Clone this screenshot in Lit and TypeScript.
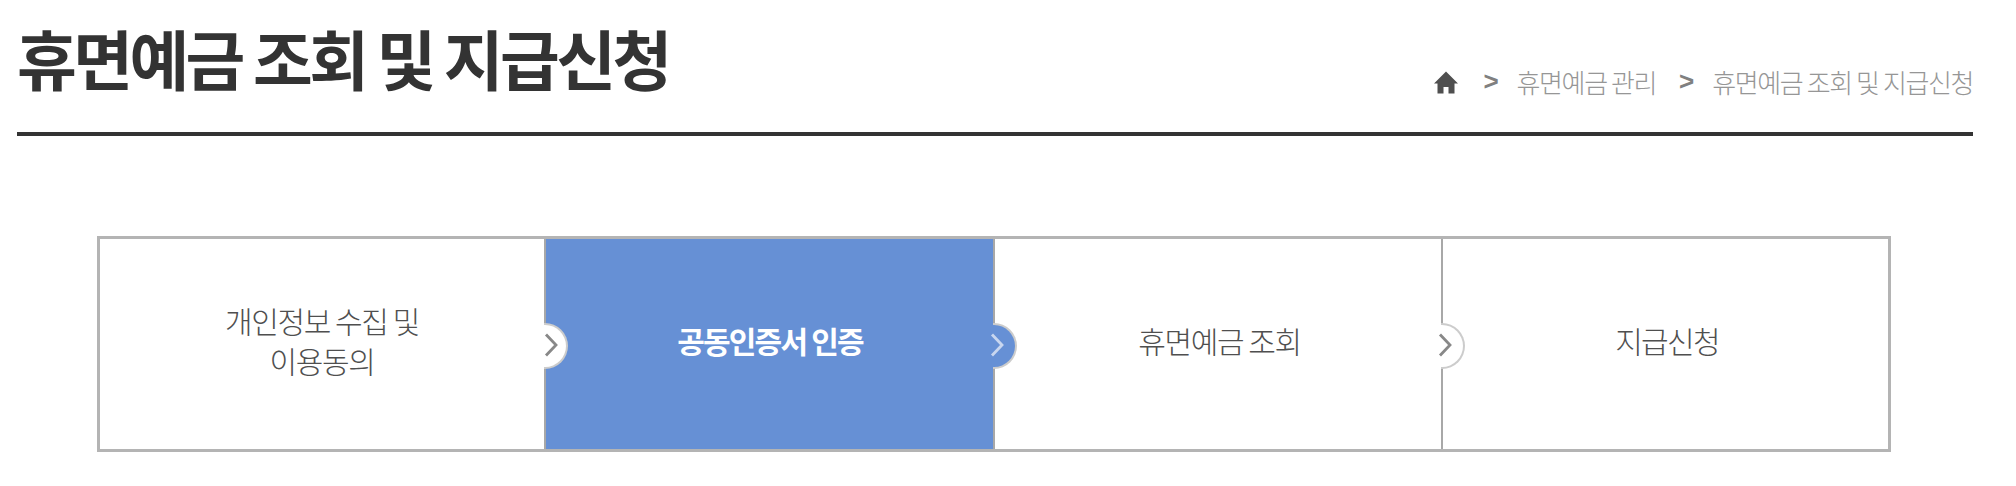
import { LitElement, html, css, svg } from "lit";
import { customElement } from "lit/decorators.js";

@customElement("app-root")
export class AppRoot extends LitElement {
  static styles = css`
    :host { display: block; width: 2016px; height: 486px; background: #fff; font-family: "Noto Sans CJK KR", "Noto Sans", sans-serif; overflow: hidden; }
    .wrap { padding: 0 43px 0 17px; }
    .head { display: flex; justify-content: space-between; align-items: flex-end; height: 132px; border-bottom: 4px solid #333; box-sizing: content-box; }
    h1 { margin: 0 0 35px; font-size: 65px; line-height: 80px; font-weight: 700; letter-spacing: -3.6px; color: #333; white-space: nowrap; }
    .crumbs { display: flex; align-items: center; height: 40px; margin-bottom: 31px; font-size: 26px; font-weight: 300; letter-spacing: -1.4px; color: #969696; white-space: nowrap; }
    .home { width: 24px; height: 23px; margin: 3px 25px 0 0; display: block; }
    .sep { font-family: "Liberation Sans", sans-serif; font-weight: 700; font-size: 26px; letter-spacing: 0; color: #808080; margin-right: 18px; }
    .crumb { margin-right: 23px; }
    .crumb:last-child { margin-right: 0; }
    .steps { display: grid; grid-template-columns: 446px 449px 448px 445px; height: 210px; margin: 100px 125px 0 97px; border: 3px solid #b4b4b4; }
    .step { position: relative; display: flex; align-items: center; justify-content: center; text-align: center; font-size: 30px; line-height: 40px; letter-spacing: -1.4px; font-weight: 300; color: #4f4f4f; border-right: 2px solid #a8a8a8; padding-bottom: 8px; }
    .step:last-child { border-right: 0; letter-spacing: -1.7px; }
    .step:nth-child(2) { padding-left: 1px; }
    .step:nth-child(3), .step:nth-child(4) { padding-left: 3px; }
    .step.on { background: #6690d5; color: #fff; font-weight: 700; letter-spacing: -1.8px; }
    .bump { position: absolute; z-index: 1; left: 100%; top: 50%; width: 22px; height: 42px; margin-top: -21px; box-sizing: content-box; background: #fff; border: 2px solid #ccc; border-left: 0; border-radius: 0 24px 24px 0; }
    .bump.blue { background: #6690d5; }
    .bump svg { position: absolute; left: -3px; top: 7px; width: 14px; height: 26px; display: block; }
    .step:first-child .bump svg { left: 0; }
  `;

  private chev(color: string) {
    return html`<svg viewBox="0 0 14 26" fill="none">${svg`<path d="M2 2.5 L12 13 L2 23.5" stroke=${color} stroke-width="2.8"/>`}</svg>`;
  }

  render() {
    const steps = [
      { t: html`개인정보 수집 및<br />이용동의`, on: false, bump: "#888" },
      { t: html`공동인증서 인증`, on: true, bump: "#c8d6ef" },
      { t: html`휴면예금 조회`, on: false, bump: "#888" },
      { t: html`지급신청`, on: false, bump: "" },
    ];
    return html`
      <div class="wrap">
        <div class="head">
          <h1>휴면예금 조회 및 지급신청</h1>
          <div class="crumbs">
            <svg class="home" viewBox="0 0 24 23"><path fill="#4f4f4f" d="M12 0.5 L24 12.5 H20.5 V22.5 H14.5 V16 H9.5 V22.5 H3.5 V12.5 H0 Z"/></svg>
            <span class="sep">&gt;</span>
            <span class="crumb">휴면예금 관리</span>
            <span class="sep">&gt;</span>
            <span class="crumb">휴면예금 조회 및 지급신청</span>
          </div>
        </div>
      </div>
      <div class="steps">
        ${steps.map(
          (s) => html`<div class="step ${s.on ? "on" : ""}">
            <span>${s.t}</span>
            ${s.bump
              ? html`<div class="bump ${s.on ? "blue" : ""}">${this.chev(s.bump)}</div>`
              : ""}
          </div>`
        )}
      </div>
    `;
  }
}
